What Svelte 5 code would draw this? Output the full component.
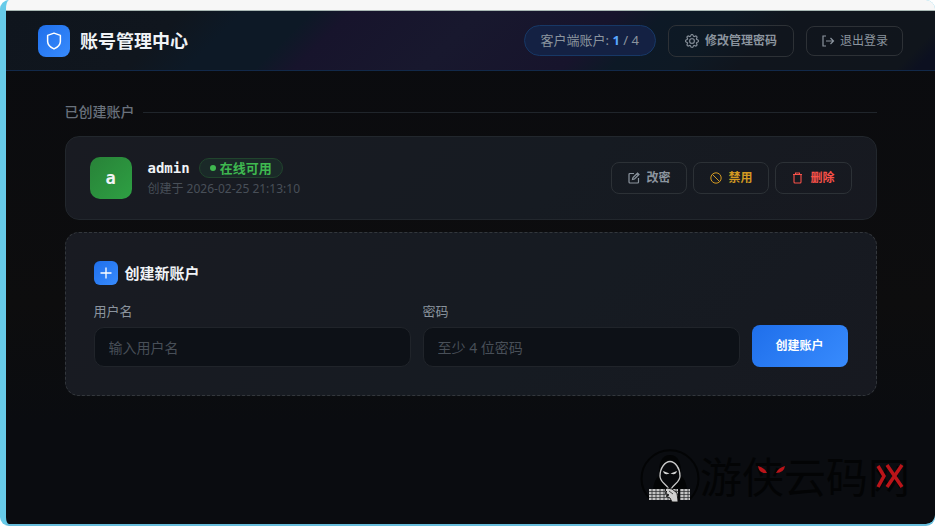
<script>
  let username = $state('');
  let password = $state('');
  const limit = 4;
  const accounts = [{ name: 'admin', status: '在线可用', created: '2026-02-25 21:13:10' }];
  const keyColumns = [0, 1, 2, 3, 4, 5, 6, 7, 8, 9];
</script>

<div class="frame">
  <div class="strip"></div>
  <div class="app">
    <header>
      <div class="brand">
        <span class="logo">
          <svg width="18" height="18" viewBox="0 0 24 24" fill="none" stroke="currentColor" stroke-width="2" stroke-linejoin="round"><path d="M12 1.500 20.500 4.500v8c0 4.500-3.500 7.500-8.500 10-5-2.500-8.500-5.500-8.500-10v-8z" /></svg>
        </span>
        <h1>账号管理中心</h1>
      </div>
      <div class="tools">
        <span class="count">客户端账户: <b>{accounts.length}</b> / {limit}</span>
        <button class="tool password" type="button">
          <svg width="14" height="14" viewBox="0 0 16 16" fill="currentColor" stroke="currentColor" stroke-width=".3"><path d="M8 4.754a3.246 3.246 0 1 0 0 6.492 3.246 3.246 0 0 0 0-6.492zM5.754 8a2.246 2.246 0 1 1 4.492 0 2.246 2.246 0 0 1-4.492 0z" /><path d="M9.796 1.343c-.527-1.790-3.065-1.790-3.592 0l-.094.319a.873.873 0 0 1-1.255.52l-.292-.16c-1.640-.892-3.433.902-2.540 2.541l.159.292a.873.873 0 0 1-.52 1.255l-.319.094c-1.790.527-1.790 3.065 0 3.592l.319.094a.873.873 0 0 1 .52 1.255l-.16.292c-.892 1.640.901 3.434 2.541 2.540l.292-.159a.873.873 0 0 1 1.255.52l.094.319c.527 1.790 3.065 1.790 3.592 0l.094-.319a.873.873 0 0 1 1.255-.52l.292.16c1.640.893 3.434-.902 2.540-2.541l-.159-.292a.873.873 0 0 1 .52-1.255l.319-.094c1.790-.527 1.790-3.065 0-3.592l-.319-.094a.873.873 0 0 1-.52-1.255l.16-.292c.893-1.640-.902-3.433-2.541-2.540l-.292.159a.873.873 0 0 1-1.255-.52l-.094-.319zm-2.633.283c.246-.835 1.428-.835 1.674 0l.094.319a1.873 1.873 0 0 0 2.693 1.115l.291-.16c.764-.415 1.600.42 1.184 1.185l-.159.292a1.873 1.873 0 0 0 1.116 2.692l.318.094c.835.246.835 1.428 0 1.674l-.319.094a1.873 1.873 0 0 0-1.115 2.693l.16.291c.415.764-.42 1.600-1.185 1.184l-.291-.159a1.873 1.873 0 0 0-2.693 1.116l-.094.318c-.246.835-1.428.835-1.674 0l-.094-.319a1.873 1.873 0 0 0-2.692-1.115l-.292.16c-.764.415-1.600-.42-1.184-1.185l.159-.291A1.873 1.873 0 0 0 1.945 8.930l-.319-.094c-.835-.246-.835-1.428 0-1.674l.319-.094A1.873 1.873 0 0 0 3.060 4.377l-.16-.292c-.415-.764.42-1.600 1.185-1.184l.292.159a1.873 1.873 0 0 0 2.692-1.115z" /></svg>
          修改管理密码
        </button>
        <button class="tool logout" type="button">
          <svg width="14" height="14" viewBox="0 0 14 14" fill="none" stroke="currentColor" stroke-width="1.200"><path d="M5 2H2v10h3M5 7h7.500M9.500 4l3 3-3 3" /></svg>
          退出登录
        </button>
      </div>
    </header>

    <main>
      <h2>已创建账户</h2>
      {#each accounts as account}
        <section class="card account">
          <span class="avatar">{account.name[0]}</span>
          <div class="info">
            <div class="name"><strong>{account.name}</strong><span class="badge">{account.status}</span></div>
            <div class="date">创建于 {account.created}</div>
          </div>
          <div class="actions">
            <button type="button" class="edit">
              <svg width="12" height="12" viewBox="0 0 12 12" fill="none" stroke="currentColor" stroke-width="1.200"><path d="M6 1.500H2Q1 1.500 1 2.500v7.500q0 1 1 1h7.500q1 0 1-1V6M4.500 7.500 5 5.500 9.500 1l1.500 1.500L6.500 7zM8.500 2 10 3.500" /></svg>
              改密
            </button>
            <button type="button" class="disable">
              <svg width="12" height="12" viewBox="0 0 12 12" fill="none" stroke="currentColor" stroke-width="1"><circle cx="6" cy="6" r="5.200" /><path d="m2.300 2.300 7.400 7.400" /></svg>
              禁用
            </button>
            <button type="button" class="delete">
              <svg width="12" height="12" viewBox="0 0 12 12" fill="none" stroke="currentColor" stroke-width="1.100"><path d="M1 2.500h9M3.500 2.500V1h4v1.500M2 2.500v7.500q0 1 1 1h5q1 0 1-1V2.500" /></svg>
              删除
            </button>
          </div>
        </section>
      {/each}

      <section class="card create">
        <h3>
          <span class="plus"><svg width="12" height="12" viewBox="0 0 12 12" stroke="currentColor" stroke-width="1.300"><path d="M6 .5v11M.5 6h11" /></svg></span>
          创建新账户
        </h3>
        <form onsubmit={(e) => e.preventDefault()}>
          <div class="field">
            <label for="username">用户名</label>
            <input id="username" type="text" placeholder="输入用户名" bind:value={username} />
          </div>
          <div class="field">
            <label for="password">密码</label>
            <input id="password" type="password" placeholder="至少 4 位密码" bind:value={password} />
          </div>
          <button type="submit">创建账户</button>
        </form>
      </section>
    </main>

    <div class="watermark">
      <svg class="hacker" width="60" height="56" viewBox="0 0 60 56">
        <path d="M10 50A28.500 28.500 0 1 1 50 50" fill="none" stroke="#030405" stroke-width="2" />
        <path d="M13 41q1-11 6-14-1-21 11-21t11 21q5 3 6 14z" fill="#030405" />
        <path d="M30 12.500C25 12.500 20 19 20 27c0 6 5 7 9 13h2c4-6 9-7 9-13 0-8-5-14.500-10-14.500z" fill="#08090c" stroke="#c9c9c9" stroke-width="1.300" />
        <path d="m23 22 6.500 2.500q-5 2.500-6.500-2.500zm14 0-6.500 2.500q5 2.500 6.500-2.500z" fill="#d5d5d5" />
        <rect x="9" y="40" width="41" height="11" fill="#c4c4c4" />
        {#each keyColumns as i}
          <path d="M{12 + i * 4} 40v11" stroke="#292b2d" stroke-width=".8" />
        {/each}
        <path d="M9 42.500h41M9 45.500h41M9 48.500h41" stroke="#292b2d" stroke-width=".7" />
        <path d="M39 39v13" stroke="#08090c" stroke-width="2" />
        <path d="m25 41 2-2 5 1 5 4 1 8v1h-6l-2-4-4-2 3-1-4-2 2-1z" fill="#cfcfcf" stroke="#0b0b0b" stroke-width=".9" />
        <path d="m29 42 4 3" stroke="#222" stroke-width=".8" />
      </svg>
      <span class="site">
        游侠云码网
        <svg width="210" height="56" viewBox="0 0 210 56">
          <path d="M58 17q7 2 9 7-8 1-9-7zM85 17q-7 2-9 7 8 0 9-7z" fill="#ba1419" />
          <path d="m178 17 6 10-6 11M187 16l15 22M202 16l-15 22" fill="none" stroke="#ba1419" stroke-width="3.500" />
        </svg>
      </span>
    </div>
  </div>
</div>

<style>
  :global(body) { margin: 0; background: #fff; }
  * { box-sizing: border-box; }
  .frame {
    min-height: 100vh; display: flex; flex-direction: column; overflow: hidden;
    border-left: 6px solid #67cbe9; border-bottom: 2px solid #67bddb; border-radius: 9px;
    background: #67cbe9;
    font-family: "Noto Sans", "Noto Sans CJK SC", sans-serif; color: #f0f3f6;
  }
  .strip { height: 11px; background: #f7f7f7; border-bottom: 1px solid #a9b8b4; }
  .app { position: relative; flex: 1; background: linear-gradient(180deg, #0a0b0f, #0d0d0e 57%, #0a0c10 80%); border-radius: 0 0 9px 0; }
  header {
    display: flex; align-items: center; justify-content: space-between; height: 60px; padding: 0 32px;
    border-bottom: 1px solid #12294a;
    background: linear-gradient(135deg, #0f151d 0%, #10161e 18%, #0d1926 24%, #0d1926 31%, #17142c 35%, #18182e 48%, #17142c 62%, #0d1926 67%, #0e1924 74%, #10151d 80%, #10151c 96%, #0c1020 98%);
  }
  .brand, .tools { display: flex; align-items: center; }
  .brand { gap: 10px; }
  .tools { gap: 12px; }
  .logo, .plus { display: grid; place-items: center; background: linear-gradient(135deg, #1f6feb, #388bfd); color: #fff; }
  .logo { width: 32px; height: 32px; border-radius: 8px; }
  h1 { margin: 0; font-size: 18px; line-height: 24px; }
  .count { padding: 0 16px; border: 1px solid #173866; border-radius: 16px; background: #142143; font-size: 13px; line-height: 29px; color: #8b949e; }
  .count b { color: #58a6ff; }
  button { display: flex; align-items: center; justify-content: center; font-family: inherit; font-size: 12px; line-height: 16px; cursor: pointer; }
  svg { flex: none; display: block; }
  .tool { padding: 0 16px; border: 1px solid #2d3136; border-radius: 8px; background: transparent; color: #8b949e; }
  .password { gap: 6px; height: 32px; font-weight: 600; }
  .logout { gap: 5px; height: 30px; padding: 0 14px; }
  main { max-width: 860px; margin: 0 auto; padding: 31px 24px; }
  h2 { display: flex; align-items: center; gap: 8px; margin: 0 0 14px; font-size: 14px; line-height: 20px; font-weight: 500; color: #69717c; }
  h2::after { content: ""; flex: 1; height: 1px; background: #20252b; }
  .card { border: 1px solid #22272d; border-radius: 14px; background: linear-gradient(135deg, #191b22, #161b22 60%, #171920); }
  .account { display: flex; align-items: center; gap: 16px; padding: 20px 24px; margin-bottom: 12px; }
  .avatar { display: grid; place-items: center; width: 42px; height: 42px; border-radius: 10px; background: linear-gradient(135deg, #288238, #2ea043); font: bold 17px/24px "DejaVu Sans Mono", monospace; }
  .info { flex: 1; }
  .name { display: flex; align-items: center; gap: 9px; }
  .name strong { font: bold 14px/20px "DejaVu Sans Mono", monospace; }
  .badge { display: flex; align-items: center; gap: 4px; padding: 0 10px; border: 1px solid #21442d; border-radius: 10px; background: #1a2928; color: #3fb950; font-size: 13px; line-height: 18px; font-weight: 600; }
  .badge::before { content: ""; width: 6px; height: 6px; border-radius: 50%; background: #3fb950; }
  .date { margin-top: 2px; font-size: 12px; line-height: 18px; color: #484f58; }
  .actions { display: flex; gap: 6px; }
  .actions button { gap: 6px; height: 32px; padding: 0 16px; border: 1px solid #2c3136; border-radius: 8px; background: transparent; font-weight: 600; }
  .actions .edit { color: #8b949e; }
  .actions .disable { color: #d29922; }
  .actions .delete { color: #f85149; }
  .create { padding: 28px; border: 1px dashed #33373c; }
  h3 { display: flex; align-items: center; gap: 7px; margin: 0 0 16px; font-size: 15px; line-height: 24px; }
  .plus { width: 24px; height: 24px; border-radius: 6px; }
  form { display: flex; align-items: flex-end; gap: 12px; }
  .field { flex: 1; min-width: 0; }
  label { display: block; margin-bottom: 6px; font-size: 13px; line-height: 20px; color: #8b949e; }
  input { display: block; width: 100%; height: 40px; padding: 0 14px; border: 1px solid #20242a; border-radius: 10px; background: #0d1117; color: #f0f3f6; font-family: inherit; font-size: 14px; outline: none; }
  input::placeholder { color: #484f58; opacity: 1; }
  form button { width: 96px; height: 42px; border: 0; border-radius: 8px; background: linear-gradient(135deg, #1f6feb, #388bfd); color: #fff; font-weight: 700; }
  .watermark { position: absolute; right: 25px; bottom: 19px; display: flex; align-items: center; pointer-events: none; user-select: none; }
  .site { position: relative; font-size: 42px; line-height: 56px; color: #030405; white-space: nowrap; }
  .site svg { position: absolute; inset: 0; }
</style>
